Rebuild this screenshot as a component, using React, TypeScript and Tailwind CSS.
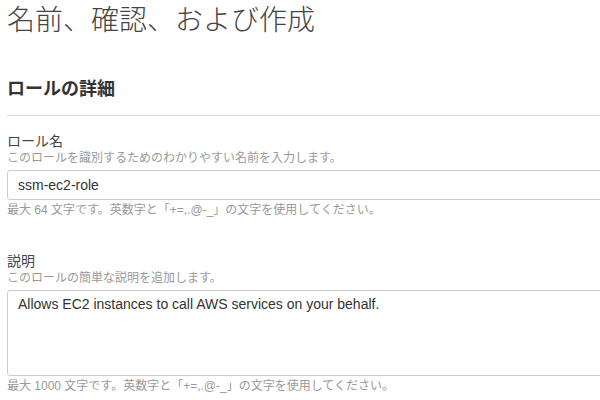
import React from "react";

export default function App() {
  return (
    <div
      className="w-[600px] h-[400px] overflow-hidden bg-white pl-[7px]"
      style={{ fontFamily: '"Liberation Sans", "Noto Sans CJK JP", sans-serif' }}
    >
      <h1 className="mt-[3px] text-[28px] leading-[36px] font-light text-[#444] whitespace-nowrap">
        名前、確認、および作成
      </h1>
      <h2 className="mt-[38px] text-[18px] leading-[24px] font-bold text-[#333] whitespace-nowrap">
        ロールの詳細
      </h2>
      <div className="mt-[14px] w-[700px] border-t border-[#d5dbdb]" />

      <div className="mt-[16px]">
        <div className="text-[14px] leading-[18px] text-[#444]">ロール名</div>
        <div className="text-[12px] leading-[16px] text-[#999] whitespace-nowrap">
          このロールを識別するためのわかりやすい名前を入力します。
        </div>
        <input
          readOnly
          value="ssm-ec2-role"
          className="mt-[4px] block h-[30px] w-[700px] rounded-[3px] border border-[#c7cdcd] px-[10px] text-[14px] text-[#333] outline-none"
          style={{ fontFamily: '"Liberation Sans", "Noto Sans CJK JP", sans-serif' }}
        />
        <div className="mt-[2px] text-[12px] leading-[16px] text-[#999] whitespace-nowrap">
          最大 64 文字です。英数字と「+=,.@-_」の文字を使用してください。
        </div>
      </div>

      <div className="mt-[34px]">
        <div className="text-[14px] leading-[18px] text-[#444]">説明</div>
        <div className="text-[12px] leading-[16px] text-[#999] whitespace-nowrap">
          このロールの簡単な説明を追加します。
        </div>
        <textarea
          readOnly
          value="Allows EC2 instances to call AWS services on your behalf."
          className="mt-[4px] block h-[86px] w-[700px] resize-none rounded-[3px] border border-[#c7cdcd] px-[10px] pt-[3px] text-[14px] leading-[20px] text-[#333] outline-none"
          style={{ fontFamily: '"Liberation Sans", "Noto Sans CJK JP", sans-serif' }}
        />
        <div className="mt-[2px] text-[12px] leading-[16px] text-[#999] whitespace-nowrap">
          最大 1000 文字です。英数字と「+=,.@-_」の文字を使用してください。
        </div>
      </div>
    </div>
  );
}
